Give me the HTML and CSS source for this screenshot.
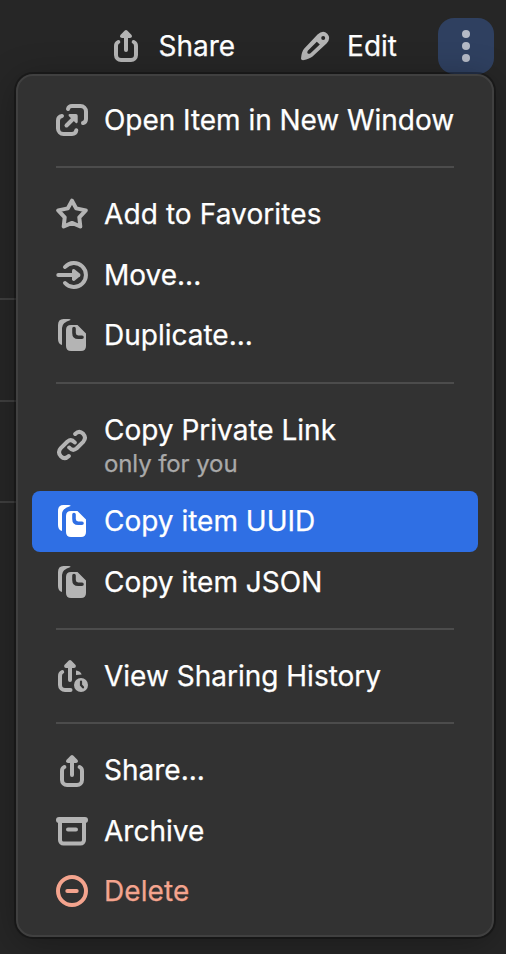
FILE: index.html
```html
<!DOCTYPE html>
<html lang="en">
<head>
<meta charset="utf-8">
<title>Item menu</title>
<link rel="stylesheet" href="styles.css">
</head>
<body>
<svg class="sprite" aria-hidden="true">
  <symbol id="share" viewBox="0 0 32 32">
    <path class="line" d="M8.3 12C6.8 12.6 6 14 6 16v9a5 5 0 0 0 5 5h10a5 5 0 0 0 5-5v-9c0-2-.8-3.4-2.3-4M16 5v15"/>
    <path class="fill" d="M14.8.6Q16-.4 17.2.6L21.6 5Q22.6 7.8 20 8h-8Q9.400 7.800 10.400 5z"/>
  </symbol>
  <symbol id="open" viewBox="0 0 32 32">
    <path class="line" d="M12 5c.5-2 2-3 4-3h8.500a5.500 5.500 0 0 1 5.500 5.500V15c0 2-1 3.500-3 4M6 12c-2.500.5-4 2-4 4.500v8A5.500 5.500 0 0 0 7.500 30H16c2.500 0 4-1.300 4.300-3.700M10.500 21.500L18 14"/>
    <path class="fill" d="M13.500 10H20q1.700 0 1.700 1.700V18q-.7 2-2.200.7l-6.700-6.700q-1-1.500.7-2z"/>
  </symbol>
  <symbol id="star" viewBox="0 0 32 32">
    <path class="line" d="M16 2.700l4.200 7.700 9.600 2-6.500 7 1 9.100-8.300-3.600L7.700 28.500l1-9.100-6.500-7 9.600-2z"/>
  </symbol>
  <symbol id="move" viewBox="0 0 32 32">
    <path class="line" d="M9 8a12 12 0 1 1 0 16M2.300 16H20"/>
    <path class="fill" d="M16 11.500q.5-2 2.500-1.200L24 14.800q1 1.200 0 2.400l-5.500 4.500q-2 .8-2.500-1.200z"/>
  </symbol>
  <symbol id="copy" viewBox="0 0 32 32">
    <path class="fill" d="M2 6Q2 0 7.500 0h5q2.500.2 2 1Q6 3.500 6 9v17Q2 25 2 20zM15 6h6.500L30 14.500V27q0 5-5 5H15q-5 0-5-5V11q0-5 5-5z"/>
    <path class="cut" d="M18 9.500v4.500q0 4.200 4.200 4.200H26"/>
  </symbol>
  <symbol id="link" viewBox="0 0 32 32">
    <path class="line" d="M19.200 5q4-4 8-.2 3.600 4 0 8l-6.700 6.700q-3.800 3-7.300-1M12.800 27q-4 4-8 .2-3.600-4 0-8l6.700-6.700q3.800-3 7.300 1"/>
  </symbol>
  <symbol id="history" viewBox="0 0 32 32">
    <path class="line" d="M6.200 12C4.800 12.600 4 14 4 16v9a5 5 0 0 0 5 5h5.500M14 5v15"/>
    <path class="fill" d="M12.800.6Q14-.4 15.200.6L19.600 5Q20.600 7.800 18 8h-8Q7.400 7.800 8.400 5zM20 10.500q4.500.5 5.700 4l-5.700.5z"/>
    <circle class="fill" cx="25" cy="25" r="7"/>
    <path class="cut thin" d="M25 21.500V25l2 2.300"/>
  </symbol>
  <symbol id="archive" viewBox="0 0 32 32">
    <path class="line" d="M4 6v19a3.500 3.500 0 0 0 3.500 3.500h17A3.500 3.500 0 0 0 28 25V6"/>
    <rect class="fill" y="2" width="32" height="6" rx="3"/>
    <rect class="fill" x="10" y="12.500" width="12" height="4" rx="2"/>
  </symbol>
  <symbol id="delete" viewBox="0 0 32 32">
    <circle class="line" cx="16" cy="16" r="14"/>
    <path class="line" d="M11.300 16h9.400"/>
  </symbol>
  <symbol id="pencil" viewBox="0 0 32 32">
    <path class="fill" fill-rule="evenodd" d="M18.500 4.500Q24-.5 28.300 3.800 32.300 8.300 27.800 13.200L13.500 26.500Q11 28.800 4 30.300 2 30.300 2 28.500 2.500 21.800 5.300 18.500zM17.800 11.700L8.800 20.700Q7.800 23 8.800 23.500 9.800 24.200 11.500 23.200L20.800 14.500z"/>
    <circle class="cut-fill" cx="24.200" cy="8" r="2"/>
  </symbol>
  <symbol id="dots" viewBox="0 0 32 32">
    <circle class="fill" cx="16" cy="4" r="4"/><circle class="fill" cx="16" cy="16" r="4"/><circle class="fill" cx="16" cy="28" r="4"/>
  </symbol>
</svg>
<div class="page">
  <header class="toolbar">
    <button class="tool share"><svg class="icon"><use href="#share"/></svg>Share</button>
    <button class="tool edit"><svg class="icon"><use href="#pencil"/></svg>Edit</button>
    <button class="more" aria-label="More"><svg class="icon"><use href="#dots"/></svg></button>
  </header>
  <div class="content">
    <div class="rules"><hr><hr><hr></div>
    <nav class="menu">
      <div class="item"><svg class="icon"><use href="#open"/></svg><span class="snug">Open Item in New Window</span></div>
      <hr class="sep">
      <div class="item"><svg class="icon"><use href="#star"/></svg><span class="wide">Add to Favorites</span></div>
      <div class="item"><svg class="icon"><use href="#move"/></svg>Move...</div>
      <div class="item"><svg class="icon"><use href="#copy"/></svg>Duplicate...</div>
      <hr class="sep">
      <div class="item tall"><svg class="icon"><use href="#link"/></svg><div>Copy Private Link<small>only for you</small></div></div>
      <div class="item active"><svg class="icon"><use href="#copy"/></svg>Copy item UUID</div>
      <div class="item even"><svg class="icon"><use href="#copy"/></svg>Copy item JSON</div>
      <hr class="sep">
      <div class="item"><svg class="icon"><use href="#history"/></svg>View Sharing History</div>
      <hr class="sep">
      <div class="item"><svg class="icon low"><use href="#share"/></svg>Share...</div>
      <div class="item"><svg class="icon"><use href="#archive"/></svg>Archive</div>
      <div class="item danger"><svg class="icon"><use href="#delete"/></svg><span class="wide">Delete</span></div>
    </nav>
  </div>
</div>
</body>
</html>
```
FILE: styles.css
```css
* { box-sizing: border-box; }
body {
  margin: 0;
  background: #262626;
  color: #fff;
  font: 400 28px/34px Inter, sans-serif;
  -webkit-text-stroke: .25px currentColor;
  --surface: #262626;
}
.sprite { position: absolute; width: 0; height: 0; }
.page { height: 954px; overflow: hidden; }
.icon { width: 32px; height: 32px; flex: none; color: #b4b4b4; overflow: visible; }
.low { margin-top: 1.6px; }
.line { fill: none; stroke: currentColor; stroke-width: 4; stroke-linecap: round; stroke-linejoin: round; }
.fill { fill: currentColor; }
.cut { fill: none; stroke: var(--surface); stroke-width: 3.6; stroke-linecap: round; }
.thin { stroke-width: 2.2; }
.cut-fill { fill: var(--surface); }

.toolbar { display: flex; align-items: center; justify-content: flex-end; height: 74px; padding: 18px 12px 0 0; }
.tool, .more { border: 0; padding: 0; background: none; color: inherit; font: inherit; display: flex; align-items: center; }
.tool { gap: 16px; }
.share { margin-right: 64px; }
.edit { margin-right: 41px; }
.more { width: 56px; height: 56px; border-radius: 16px; background: #2f4060; justify-content: center; }
.more .icon { color: #b5bac6; }

.content { display: flex; align-items: flex-start; }
.rules { width: 16px; padding-top: 224px; }
.rules hr { border: 0; height: 2px; margin: 0 0 100px; background: #3f3f3f; }
.rules hr:nth-child(2) { margin-bottom: 99px; }
.menu {
  --surface: #323232;
  position: relative;
  width: 478px;
  height: 863px;
  padding: 14px;
  border: 2px solid #404040;
  border-radius: 17px;
  background: var(--surface);
  box-shadow: 0 0 0 2px rgba(0, 0, 0, .28), 0 6px 36px rgba(0, 0, 0, .3);
}
.item { display: flex; align-items: center; gap: 16px; height: 60.45px; padding: 0 24px .8px; border-radius: 8px; white-space: nowrap; }
.item.tall { height: 91.35px; }
.item.even { padding-bottom: 0; }
.tall > div { margin-top: 2.8px; }
.item small { display: block; font-size: 24px; line-height: 33px; color: #a9a9a9; letter-spacing: -.1px; }
.snug { letter-spacing: -.04px; }
.wide { letter-spacing: .1px; }
.active { --surface: #2f6fe4; background: var(--surface); }
.active .icon { color: #fff; }
.danger, .danger .icon { color: #f4a48e; }
.sep { border: 0; height: 2px; margin: 16px 24px; background: #4c4c4c; }
```
